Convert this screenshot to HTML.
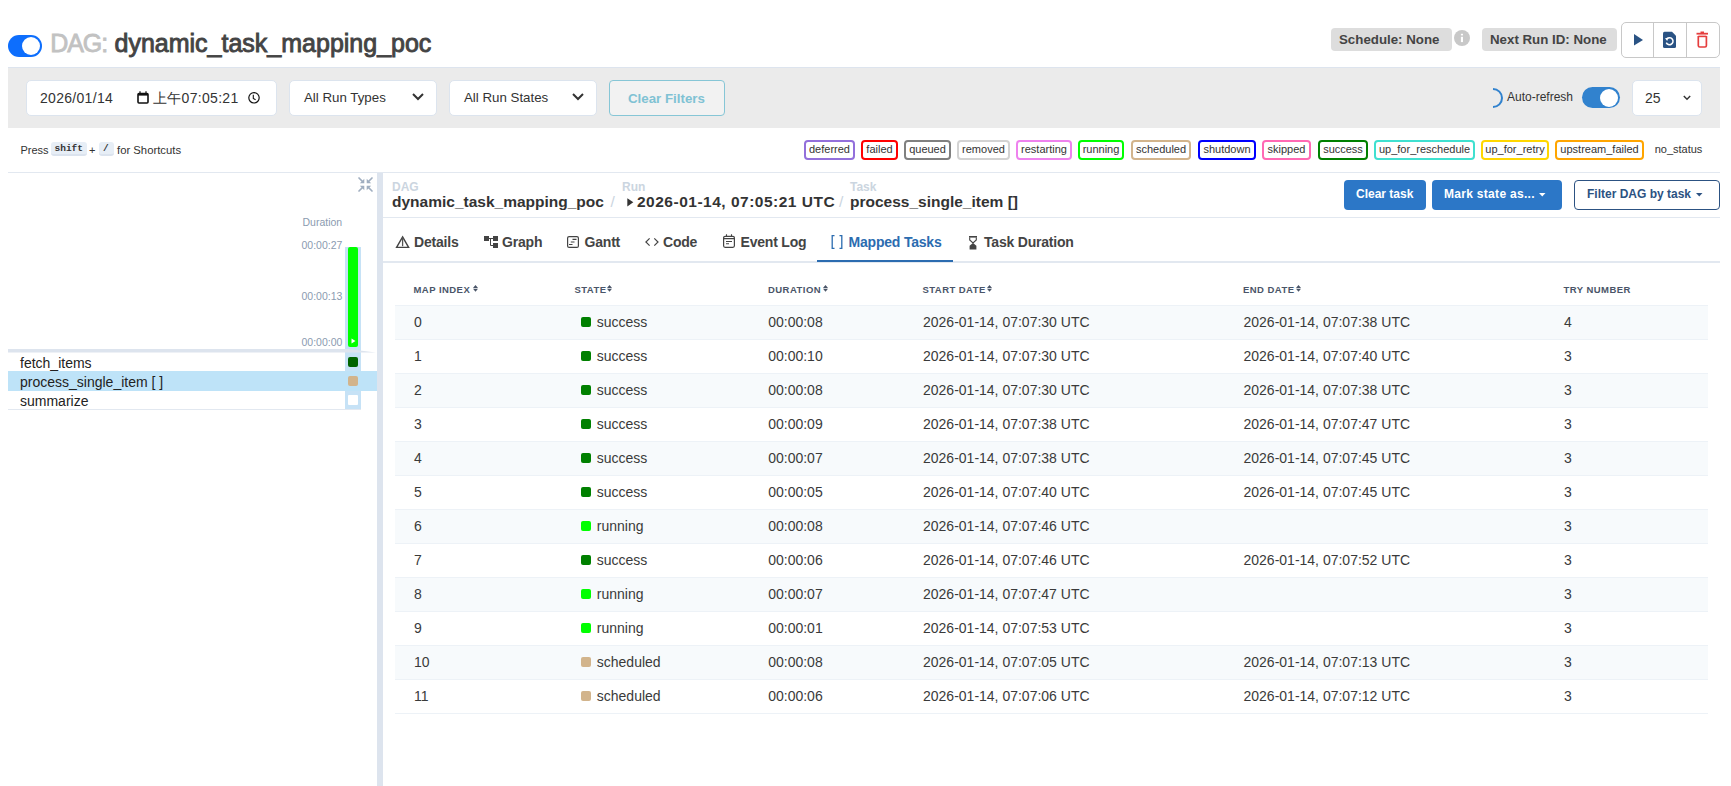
<!DOCTYPE html>
<html><head><meta charset="utf-8">
<style>
*{box-sizing:border-box;margin:0;padding:0}
html,body{width:1731px;height:786px;overflow:hidden;background:#fff}
body{-webkit-font-smoothing:antialiased}
body{font-family:"Liberation Sans",sans-serif;color:#444;position:relative}
.a{position:absolute;white-space:nowrap}
.t{position:absolute;white-space:nowrap;line-height:1}
svg{position:absolute;display:block;overflow:visible}
.lg{position:absolute;top:140px;height:20px;border:2px solid;border-radius:4px;font-size:11px;line-height:15px;text-align:center;color:#333}
.tab{position:absolute;top:234.5px;letter-spacing:-0.2px;font-size:14px;font-weight:700;line-height:1;color:#444}
.th{position:absolute;top:285px;font-size:9.5px;font-weight:700;letter-spacing:0.45px;color:#4a5568;line-height:1}
.row{position:absolute;left:395px;width:1313px;height:34px;border-bottom:1px solid #edf2f7}
.c{position:absolute;top:9px;font-size:14px;line-height:1;color:#3a3a3a}
.sq{position:absolute;left:186px;top:11px;width:10px;height:10px;border-radius:2px}
</style></head><body>
<!-- ===== Title row ===== -->
<div class="a" style="left:8px;top:35px;width:34px;height:22px;border-radius:11px;background:#0d6efd"></div>
<div class="a" style="left:22px;top:37px;width:18px;height:18px;border-radius:9px;background:#fff"></div>
<div class="t" style="left:50.3px;top:31px;font-size:25px;color:#c2c2c2;letter-spacing:-1.1px;-webkit-text-stroke:0.8px #c2c2c2">DAG:</div>
<div class="t" style="left:114.5px;top:31px;font-size:25px;color:#444;-webkit-text-stroke:0.9px #444">dynamic_task_mapping_poc</div>

<div class="a" style="left:1331px;top:28px;width:121px;height:23px;background:#ddd;border-radius:4px"></div>
<div class="t" style="left:1339px;top:33px;font-size:13.3px;font-weight:700;color:#444">Schedule: None</div>
<div class="a" style="left:1454px;top:30px;width:16px;height:16px;border-radius:8px;background:#c8c8c8"></div>
<svg style="left:1454px;top:30px" width="16" height="16" viewBox="0 0 16 16"><rect x="6.9" y="3.8" width="2.1" height="1.6" fill="#fff"/><rect x="6.9" y="6.8" width="2.1" height="5.3" fill="#fff"/></svg>
<div class="a" style="left:1482px;top:28px;width:135px;height:23px;background:#ddd;border-radius:4px"></div>
<div class="t" style="left:1490px;top:33px;font-size:13.3px;font-weight:700;color:#444">Next Run ID: None</div>
<div class="a" style="left:1621px;top:22px;width:99px;height:36px;border:1px solid #c8c8c8;border-radius:5px"></div>
<div class="a" style="left:1653px;top:23px;width:1px;height:34px;background:#c8c8c8"></div>
<div class="a" style="left:1686px;top:23px;width:1px;height:34px;background:#c8c8c8"></div>
<svg style="left:1634px;top:34px" width="10" height="12" viewBox="0 0 10 12"><path d="M0 0 L9 6 L0 11.5Z" fill="#2a5384"/></svg>
<svg style="left:1662px;top:31px" width="15" height="18" viewBox="0 0 15 18"><path d="M2.5 0.8 H10 L14 4.8 V15.5 Q14 17 12.5 17 H2.5 Q1 17 1 15.5 V2.3 Q1 0.8 2.5 0.8Z" fill="#2a5384"/><path d="M5.2 7.6 A3.5 3.5 0 1 1 4.3 11.6" fill="none" stroke="#fff" stroke-width="1.5"/><path d="M3 7.2 L6.6 6.6 L5.2 10Z" fill="#fff"/></svg>
<svg style="left:1696px;top:31px" width="13" height="17" viewBox="0 0 13 17"><path d="M0.5 2.7 H12" stroke="#e53e3e" stroke-width="1.8"/><path d="M4.5 1.3 H8" stroke="#e53e3e" stroke-width="1.6"/><path d="M2.3 5 V14.6 Q2.3 16 3.7 16 H9 Q10.4 16 10.4 14.6 V5" fill="none" stroke="#e53e3e" stroke-width="1.7"/><path d="M2.3 5.4 H10.4" stroke="#e53e3e" stroke-width="1.6"/></svg>

<!-- ===== Filter bar ===== -->
<div class="a" style="left:8px;top:67px;width:1712px;height:61px;background:#ebebeb;border-top:1px solid #dde4ee"></div>
<div class="a" style="left:26px;top:80px;width:251px;height:36px;background:#fff;border:1px solid #dce4ee;border-radius:5px"></div>
<div class="t" style="left:40px;top:91px;font-size:14px;color:#333;letter-spacing:0.3px">2026/01/14</div>
<svg style="left:137px;top:91px" width="12" height="13" viewBox="0 0 12 13"><rect x="1" y="2.6" width="10" height="9.4" rx="1" fill="none" stroke="#111" stroke-width="1.6"/><rect x="1" y="2" width="10" height="2.6" fill="#111"/><path d="M3 0.3 V2.5 M9 0.3 V2.5" stroke="#111" stroke-width="1.2"/></svg>
<div class="t" style="left:153px;top:91px;font-size:14px;color:#333;letter-spacing:0.3px">上午07:05:21</div>
<svg style="left:248px;top:92px" width="13" height="12" viewBox="0 0 13 12"><circle cx="6" cy="5.8" r="5.2" fill="none" stroke="#111" stroke-width="1.2"/><path d="M5.3 2.8 V6.4 L7.6 7.8" fill="none" stroke="#111" stroke-width="1.1"/></svg>
<div class="a" style="left:289px;top:80px;width:148px;height:36px;background:#fff;border:1px solid #dce4ee;border-radius:5px"></div>
<div class="t" style="left:304px;top:91px;font-size:13.3px;color:#333">All Run Types</div>
<svg style="left:412px;top:93px" width="12" height="8" viewBox="0 0 12 8"><path d="M1 1 L6 6 L11 1" fill="none" stroke="#333" stroke-width="2"/></svg>
<div class="a" style="left:449px;top:80px;width:148px;height:36px;background:#fff;border:1px solid #dce4ee;border-radius:5px"></div>
<div class="t" style="left:464px;top:91px;font-size:13.3px;color:#333">All Run States</div>
<svg style="left:572px;top:93px" width="12" height="8" viewBox="0 0 12 8"><path d="M1 1 L6 6 L11 1" fill="none" stroke="#333" stroke-width="2"/></svg>
<div class="a" style="left:609px;top:80px;width:116px;height:36px;background:#f2f2f2;border:1px solid #86c6d6;border-radius:4px"></div>
<div class="t" style="left:628px;top:92px;font-size:13.3px;font-weight:700;color:#80c2d4">Clear Filters</div>

<svg style="left:1484px;top:88px" width="20" height="20" viewBox="0 0 20 20"><path d="M9 1 A9 9 0 0 1 9 19" fill="none" stroke="#3182ce" stroke-width="2"/></svg>
<div class="t" style="left:1507px;top:91px;font-size:12px;color:#333">Auto-refresh</div>
<div class="a" style="left:1582px;top:87px;width:38px;height:21px;border-radius:11px;background:#3182ce"></div>
<div class="a" style="left:1600px;top:88.5px;width:18px;height:18px;border-radius:9px;background:#fff"></div>
<div class="a" style="left:1632px;top:80px;width:70px;height:36px;background:#fff;border:1px solid #dce4ee;border-radius:5px"></div>
<div class="t" style="left:1645px;top:91px;font-size:14px;color:#333">25</div>
<svg style="left:1683px;top:95px" width="8" height="6" viewBox="0 0 8 6"><path d="M0.8 1 L4 4.3 L7.2 1" fill="none" stroke="#333" stroke-width="1.4"/></svg>

<!-- ===== Shortcuts + legend ===== -->
<div class="t" style="left:20.5px;top:144.5px;font-size:11px;color:#333">Press</div>
<div class="a" style="left:51px;top:142px;width:35.5px;height:14px;border-radius:3px;background:#e7eef6;border-bottom:2px solid #dbe3ee"></div>
<div class="t" style="left:54.5px;top:143.5px;font-size:9.5px;font-weight:700;font-family:'Liberation Mono',monospace;color:#333">shift</div>
<div class="t" style="left:89px;top:145px;font-size:11px;color:#333">+</div>
<div class="a" style="left:99px;top:142px;width:14.5px;height:14px;border-radius:3px;background:#e7eef6;border-bottom:2px solid #dbe3ee"></div>
<div class="t" style="left:103px;top:143.5px;font-size:9.5px;font-weight:700;font-family:'Liberation Mono',monospace;color:#333">/</div>
<div class="t" style="left:117px;top:144.8px;font-size:11.3px;color:#333">for Shortcuts</div>

<div class="lg" style="left:804px;width:51px;border-color:#9370db">deferred</div>
<div class="lg" style="left:861px;width:37px;border-color:#ff0000">failed</div>
<div class="lg" style="left:904px;width:47px;border-color:#808080">queued</div>
<div class="lg" style="left:957px;width:53px;border-color:#d3d3d3">removed</div>
<div class="lg" style="left:1016px;width:56px;border-color:#ee82ee">restarting</div>
<div class="lg" style="left:1078px;width:46px;border-color:#00ff00">running</div>
<div class="lg" style="left:1131px;width:60px;border-color:#d2b48c">scheduled</div>
<div class="lg" style="left:1198px;width:58px;border-color:#0000ff">shutdown</div>
<div class="lg" style="left:1262px;width:49px;border-color:#ff69b4">skipped</div>
<div class="lg" style="left:1318px;width:50px;border-color:#008000">success</div>
<div class="lg" style="left:1374px;width:101px;border-color:#40e0d0">up_for_reschedule</div>
<div class="lg" style="left:1481px;width:68px;border-color:#ffd700">up_for_retry</div>
<div class="lg" style="left:1555px;width:89px;border-color:#ffa500">upstream_failed</div>
<div class="lg" style="left:1650px;width:57px;border-color:transparent">no_status</div>

<!-- line -->
<div class="a" style="left:8px;top:172px;width:1712px;height:1px;background:#e2e8f0"></div>
<!-- ===== Left panel ===== -->
<svg style="left:358px;top:177px" width="15" height="15" viewBox="0 0 15 15"><g fill="none" stroke="#a0aec0" stroke-width="1.7" stroke-linecap="round"><path d="M1 1 L4.5 4.5 M14 1 L10.5 4.5 M1 14 L4.5 10.5 M14 14 L10.5 10.5"/></g><g fill="#a0aec0"><path d="M6.3 6.3 L1.8 6.3 L6.3 1.8Z M8.7 6.3 L13.2 6.3 L8.7 1.8Z M6.3 8.7 L1.8 8.7 L6.3 13.2Z M8.7 8.7 L13.2 8.7 L8.7 13.2Z"/></g></svg>
<div class="t" style="left:302.5px;top:216.5px;font-size:10.5px;color:#8b9bb0">Duration</div>
<div class="t" style="left:301.5px;top:239.5px;font-size:10.5px;color:#8b9bb0">00:00:27</div>
<div class="t" style="left:301.5px;top:290.5px;font-size:10.5px;color:#8b9bb0">00:00:13</div>
<div class="t" style="left:301.5px;top:336.5px;font-size:10.5px;color:#8b9bb0">00:00:00</div>
<div class="a" style="left:345px;top:247px;width:16px;height:162px;background:#c6e2f6"></div>
<div class="a" style="left:348px;top:247px;width:10px;height:100px;background:#00ff00;border-radius:2px"></div>
<svg style="left:351px;top:338px" width="5" height="6" viewBox="0 0 5 6"><path d="M0.5 0.5 L4.5 3 L0.5 5.5Z" fill="#fff"/></svg>
<svg style="left:8px;top:349px" width="369" height="4" viewBox="0 0 369 4"><path d="M0 0 H340 L368 3.5 H0Z" fill="#dde4ee"/></svg>
<div class="a" style="left:8px;top:371px;width:369px;height:20px;background:#bee3f8"></div>
<div class="a" style="left:8px;top:409px;width:353px;height:1px;background:#e2e8f0"></div>
<div class="a" style="left:348px;top:357px;width:10px;height:10px;background:#006400;border-radius:2px"></div>
<div class="a" style="left:348px;top:376px;width:10px;height:10px;background:#d2b48c;border-radius:2px"></div>
<div class="a" style="left:348px;top:395px;width:10px;height:10px;background:#fff;border-radius:1px"></div>
<div class="t" style="left:20px;top:355.5px;font-size:14px;color:#222">fetch_items</div>
<div class="t" style="left:20px;top:374.5px;font-size:14px;color:#222">process_single_item [ ]</div>
<div class="t" style="left:20px;top:393.5px;font-size:14px;color:#222">summarize</div>
<div class="a" style="left:377px;top:173px;width:6px;height:613px;background:#dde4ee"></div>

<!-- ===== Right header ===== -->
<div class="t" style="left:392px;top:181px;font-size:12px;font-weight:700;color:#cbd5e0">DAG</div>
<div class="t" style="left:392px;top:193.7px;font-size:15.5px;font-weight:700;color:#333">dynamic_task_mapping_poc</div>
<div class="t" style="left:610.5px;top:193.7px;font-size:15.5px;color:#cbd5e0">/</div>
<div class="t" style="left:622px;top:181px;font-size:12px;font-weight:700;color:#cbd5e0">Run</div>
<svg style="left:627px;top:198px" width="7" height="9" viewBox="0 0 7 9"><path d="M0.3 0.3 L6.3 4.3 L0.3 8.5Z" fill="#333"/></svg>
<div class="t" style="left:637px;top:193.7px;font-size:15.5px;font-weight:700;color:#333;letter-spacing:0.5px">2026-01-14, 07:05:21 UTC</div>
<div class="t" style="left:839px;top:193.7px;font-size:15.5px;color:#cbd5e0">/</div>
<div class="t" style="left:850px;top:181px;font-size:12px;font-weight:700;color:#cbd5e0">Task</div>
<div class="t" style="left:850px;top:193.7px;font-size:15.5px;font-weight:700;color:#333">process_single_item []</div>

<div class="a" style="left:1344px;top:180px;width:82px;height:30px;background:#2c77c7;border-radius:4px"></div>
<div class="t" style="left:1356px;top:188px;font-size:12px;font-weight:700;color:#fff">Clear task</div>
<div class="a" style="left:1432px;top:180px;width:130px;height:30px;background:#2c77c7;border-radius:4px"></div>
<div class="t" style="left:1444px;top:188px;font-size:12px;font-weight:700;color:#fff;letter-spacing:0.3px">Mark state as...</div>
<svg style="left:1539px;top:193px" width="7" height="4" viewBox="0 0 7 4"><path d="M0 0 H6.5 L3.25 3.5Z" fill="#fff"/></svg>
<div class="a" style="left:1574px;top:180px;width:146px;height:30px;background:#fff;border:1px solid #2c5282;border-radius:4px"></div>
<div class="t" style="left:1587px;top:188px;font-size:12px;font-weight:700;color:#2c5282">Filter DAG by task</div>
<svg style="left:1696px;top:193px" width="7" height="4" viewBox="0 0 7 4"><path d="M0 0 H6.5 L3.25 3.5Z" fill="#2c5282"/></svg>
<div class="a" style="left:383px;top:217px;width:1337px;height:1px;background:#e2e8f0"></div>

<!-- ===== Tabs ===== -->
<svg style="left:396px;top:236px" width="14" height="13" viewBox="0 0 14 13"><path d="M6.6 0.9 L12.6 11.4 H0.6Z" fill="none" stroke="#444" stroke-width="1.4" stroke-linejoin="miter"/><path d="M6.6 1.5 V10.2" stroke="#555" stroke-width="1.3"/></svg>
<div class="tab" style="left:414px">Details</div>
<svg style="left:484px;top:236px" width="14" height="12" viewBox="0 0 14 12"><rect x="0" y="0" width="5" height="5" fill="#444"/><rect x="9" y="0" width="5" height="5" fill="#444"/><rect x="9" y="7" width="5" height="5" fill="#444"/><path d="M5 2.5 H9 M6.5 2.5 V9.5 H9" fill="none" stroke="#444" stroke-width="1"/></svg>
<div class="tab" style="left:502px">Graph</div>
<svg style="left:567px;top:236px" width="12" height="12" viewBox="0 0 12 12"><rect x="0.6" y="0.6" width="10.8" height="10.8" rx="1.5" fill="none" stroke="#444" stroke-width="1.2"/><path d="M5.5 3.4 H9.5 M3.8 6 H7.5 M2 8.5 H5.5" stroke="#444" stroke-width="1.1"/></svg>
<div class="tab" style="left:584.5px">Gantt</div>
<svg style="left:645px;top:238px" width="14" height="8" viewBox="0 0 14 8"><path d="M4.6 0.4 L0.9 4 L4.6 7.6 M9.3 0.4 L13 4 L9.3 7.6" fill="none" stroke="#444" stroke-width="1.2"/></svg>
<div class="tab" style="left:663px">Code</div>
<svg style="left:723px;top:234px" width="12" height="14" viewBox="0 0 12 14"><rect x="0.6" y="2.3" width="10.8" height="11" rx="1.5" fill="none" stroke="#444" stroke-width="1.2"/><path d="M0.6 4.6 H11.4 M3.5 0.3 V2.5 M8.5 0.3 V2.5" stroke="#444" stroke-width="1.1"/><path d="M3 7.5 H9 M3 9.8 H6" stroke="#444" stroke-width="1.1"/></svg>
<div class="tab" style="left:740.5px">Event Log</div>
<svg style="left:831px;top:235px" width="12" height="14" viewBox="0 0 12 14"><path d="M3.5 0.7 H1.2 V13.3 H3.5 M8.5 0.7 H10.8 V13.3 H8.5" fill="none" stroke="#2b6cb0" stroke-width="1.3"/></svg>
<div class="tab" style="left:848.5px;color:#2b6cb0">Mapped Tasks</div>
<svg style="left:969px;top:236px" width="8" height="14" viewBox="0 0 8 14"><path d="M0 0 H8 V1.6 H0Z" fill="#444"/><path d="M0.7 1.6 V4 L4 6.9 L7.3 4 V1.6" fill="none" stroke="#444" stroke-width="1.1"/><path d="M4 6.9 L7.4 9.8 V13.6 H0.6 V9.8Z" fill="#444"/></svg>
<div class="tab" style="left:984px">Task Duration</div>
<div class="a" style="left:383px;top:261px;width:1337px;height:2px;background:#e2e8f0"></div>
<div class="a" style="left:817px;top:260px;width:136px;height:2px;background:#2b6cb0"></div>

<!-- ===== Table ===== -->
<div class="th" style="left:413.5px">MAP INDEX</div>
<div class="th" style="left:574.5px">STATE</div>
<div class="th" style="left:768px">DURATION</div>
<div class="th" style="left:922.5px">START DATE</div>
<div class="th" style="left:1243px">END DATE</div>
<div class="th" style="left:1563.5px">TRY NUMBER</div>
<svg style="left:473px;top:285px" width="5" height="8" viewBox="0 0 5 8"><path d="M2.5 0 L5 3 H0Z M2.5 6.8 L5 3.8 H0Z" fill="#4a5568"/></svg>
<svg style="left:607px;top:285px" width="5" height="8" viewBox="0 0 5 8"><path d="M2.5 0 L5 3 H0Z M2.5 6.8 L5 3.8 H0Z" fill="#4a5568"/></svg>
<svg style="left:823px;top:285px" width="5" height="8" viewBox="0 0 5 8"><path d="M2.5 0 L5 3 H0Z M2.5 6.8 L5 3.8 H0Z" fill="#4a5568"/></svg>
<svg style="left:986.5px;top:285px" width="5" height="8" viewBox="0 0 5 8"><path d="M2.5 0 L5 3 H0Z M2.5 6.8 L5 3.8 H0Z" fill="#4a5568"/></svg>
<svg style="left:1296px;top:285px" width="5" height="8" viewBox="0 0 5 8"><path d="M2.5 0 L5 3 H0Z M2.5 6.8 L5 3.8 H0Z" fill="#4a5568"/></svg>
<div class="a" style="left:395px;top:305px;width:1313px;height:1px;background:#edf2f7"></div>
<div class="row" style="top:306px;background:#f7fafc"><span class="c" style="left:19px">0</span><i class="sq" style="background:#008000"></i><span class="c" style="left:201.8px">success</span><span class="c" style="left:373.2px">00:00:08</span><span class="c" style="left:528px">2026-01-14, 07:07:30 UTC</span><span class="c" style="left:848.5px">2026-01-14, 07:07:38 UTC</span><span class="c" style="left:1169px">4</span></div>
<div class="row" style="top:340px;background:#fff"><span class="c" style="left:19px">1</span><i class="sq" style="background:#008000"></i><span class="c" style="left:201.8px">success</span><span class="c" style="left:373.2px">00:00:10</span><span class="c" style="left:528px">2026-01-14, 07:07:30 UTC</span><span class="c" style="left:848.5px">2026-01-14, 07:07:40 UTC</span><span class="c" style="left:1169px">3</span></div>
<div class="row" style="top:374px;background:#f7fafc"><span class="c" style="left:19px">2</span><i class="sq" style="background:#008000"></i><span class="c" style="left:201.8px">success</span><span class="c" style="left:373.2px">00:00:08</span><span class="c" style="left:528px">2026-01-14, 07:07:30 UTC</span><span class="c" style="left:848.5px">2026-01-14, 07:07:38 UTC</span><span class="c" style="left:1169px">3</span></div>
<div class="row" style="top:408px;background:#fff"><span class="c" style="left:19px">3</span><i class="sq" style="background:#008000"></i><span class="c" style="left:201.8px">success</span><span class="c" style="left:373.2px">00:00:09</span><span class="c" style="left:528px">2026-01-14, 07:07:38 UTC</span><span class="c" style="left:848.5px">2026-01-14, 07:07:47 UTC</span><span class="c" style="left:1169px">3</span></div>
<div class="row" style="top:442px;background:#f7fafc"><span class="c" style="left:19px">4</span><i class="sq" style="background:#008000"></i><span class="c" style="left:201.8px">success</span><span class="c" style="left:373.2px">00:00:07</span><span class="c" style="left:528px">2026-01-14, 07:07:38 UTC</span><span class="c" style="left:848.5px">2026-01-14, 07:07:45 UTC</span><span class="c" style="left:1169px">3</span></div>
<div class="row" style="top:476px;background:#fff"><span class="c" style="left:19px">5</span><i class="sq" style="background:#008000"></i><span class="c" style="left:201.8px">success</span><span class="c" style="left:373.2px">00:00:05</span><span class="c" style="left:528px">2026-01-14, 07:07:40 UTC</span><span class="c" style="left:848.5px">2026-01-14, 07:07:45 UTC</span><span class="c" style="left:1169px">3</span></div>
<div class="row" style="top:510px;background:#f7fafc"><span class="c" style="left:19px">6</span><i class="sq" style="background:#00ff00"></i><span class="c" style="left:201.8px">running</span><span class="c" style="left:373.2px">00:00:08</span><span class="c" style="left:528px">2026-01-14, 07:07:46 UTC</span><span class="c" style="left:1169px">3</span></div>
<div class="row" style="top:544px;background:#fff"><span class="c" style="left:19px">7</span><i class="sq" style="background:#008000"></i><span class="c" style="left:201.8px">success</span><span class="c" style="left:373.2px">00:00:06</span><span class="c" style="left:528px">2026-01-14, 07:07:46 UTC</span><span class="c" style="left:848.5px">2026-01-14, 07:07:52 UTC</span><span class="c" style="left:1169px">3</span></div>
<div class="row" style="top:578px;background:#f7fafc"><span class="c" style="left:19px">8</span><i class="sq" style="background:#00ff00"></i><span class="c" style="left:201.8px">running</span><span class="c" style="left:373.2px">00:00:07</span><span class="c" style="left:528px">2026-01-14, 07:07:47 UTC</span><span class="c" style="left:1169px">3</span></div>
<div class="row" style="top:612px;background:#fff"><span class="c" style="left:19px">9</span><i class="sq" style="background:#00ff00"></i><span class="c" style="left:201.8px">running</span><span class="c" style="left:373.2px">00:00:01</span><span class="c" style="left:528px">2026-01-14, 07:07:53 UTC</span><span class="c" style="left:1169px">3</span></div>
<div class="row" style="top:646px;background:#f7fafc"><span class="c" style="left:19px">10</span><i class="sq" style="background:#d2b48c"></i><span class="c" style="left:201.8px">scheduled</span><span class="c" style="left:373.2px">00:00:08</span><span class="c" style="left:528px">2026-01-14, 07:07:05 UTC</span><span class="c" style="left:848.5px">2026-01-14, 07:07:13 UTC</span><span class="c" style="left:1169px">3</span></div>
<div class="row" style="top:680px;background:#fff"><span class="c" style="left:19px">11</span><i class="sq" style="background:#d2b48c"></i><span class="c" style="left:201.8px">scheduled</span><span class="c" style="left:373.2px">00:00:06</span><span class="c" style="left:528px">2026-01-14, 07:07:06 UTC</span><span class="c" style="left:848.5px">2026-01-14, 07:07:12 UTC</span><span class="c" style="left:1169px">3</span></div></body></html>
